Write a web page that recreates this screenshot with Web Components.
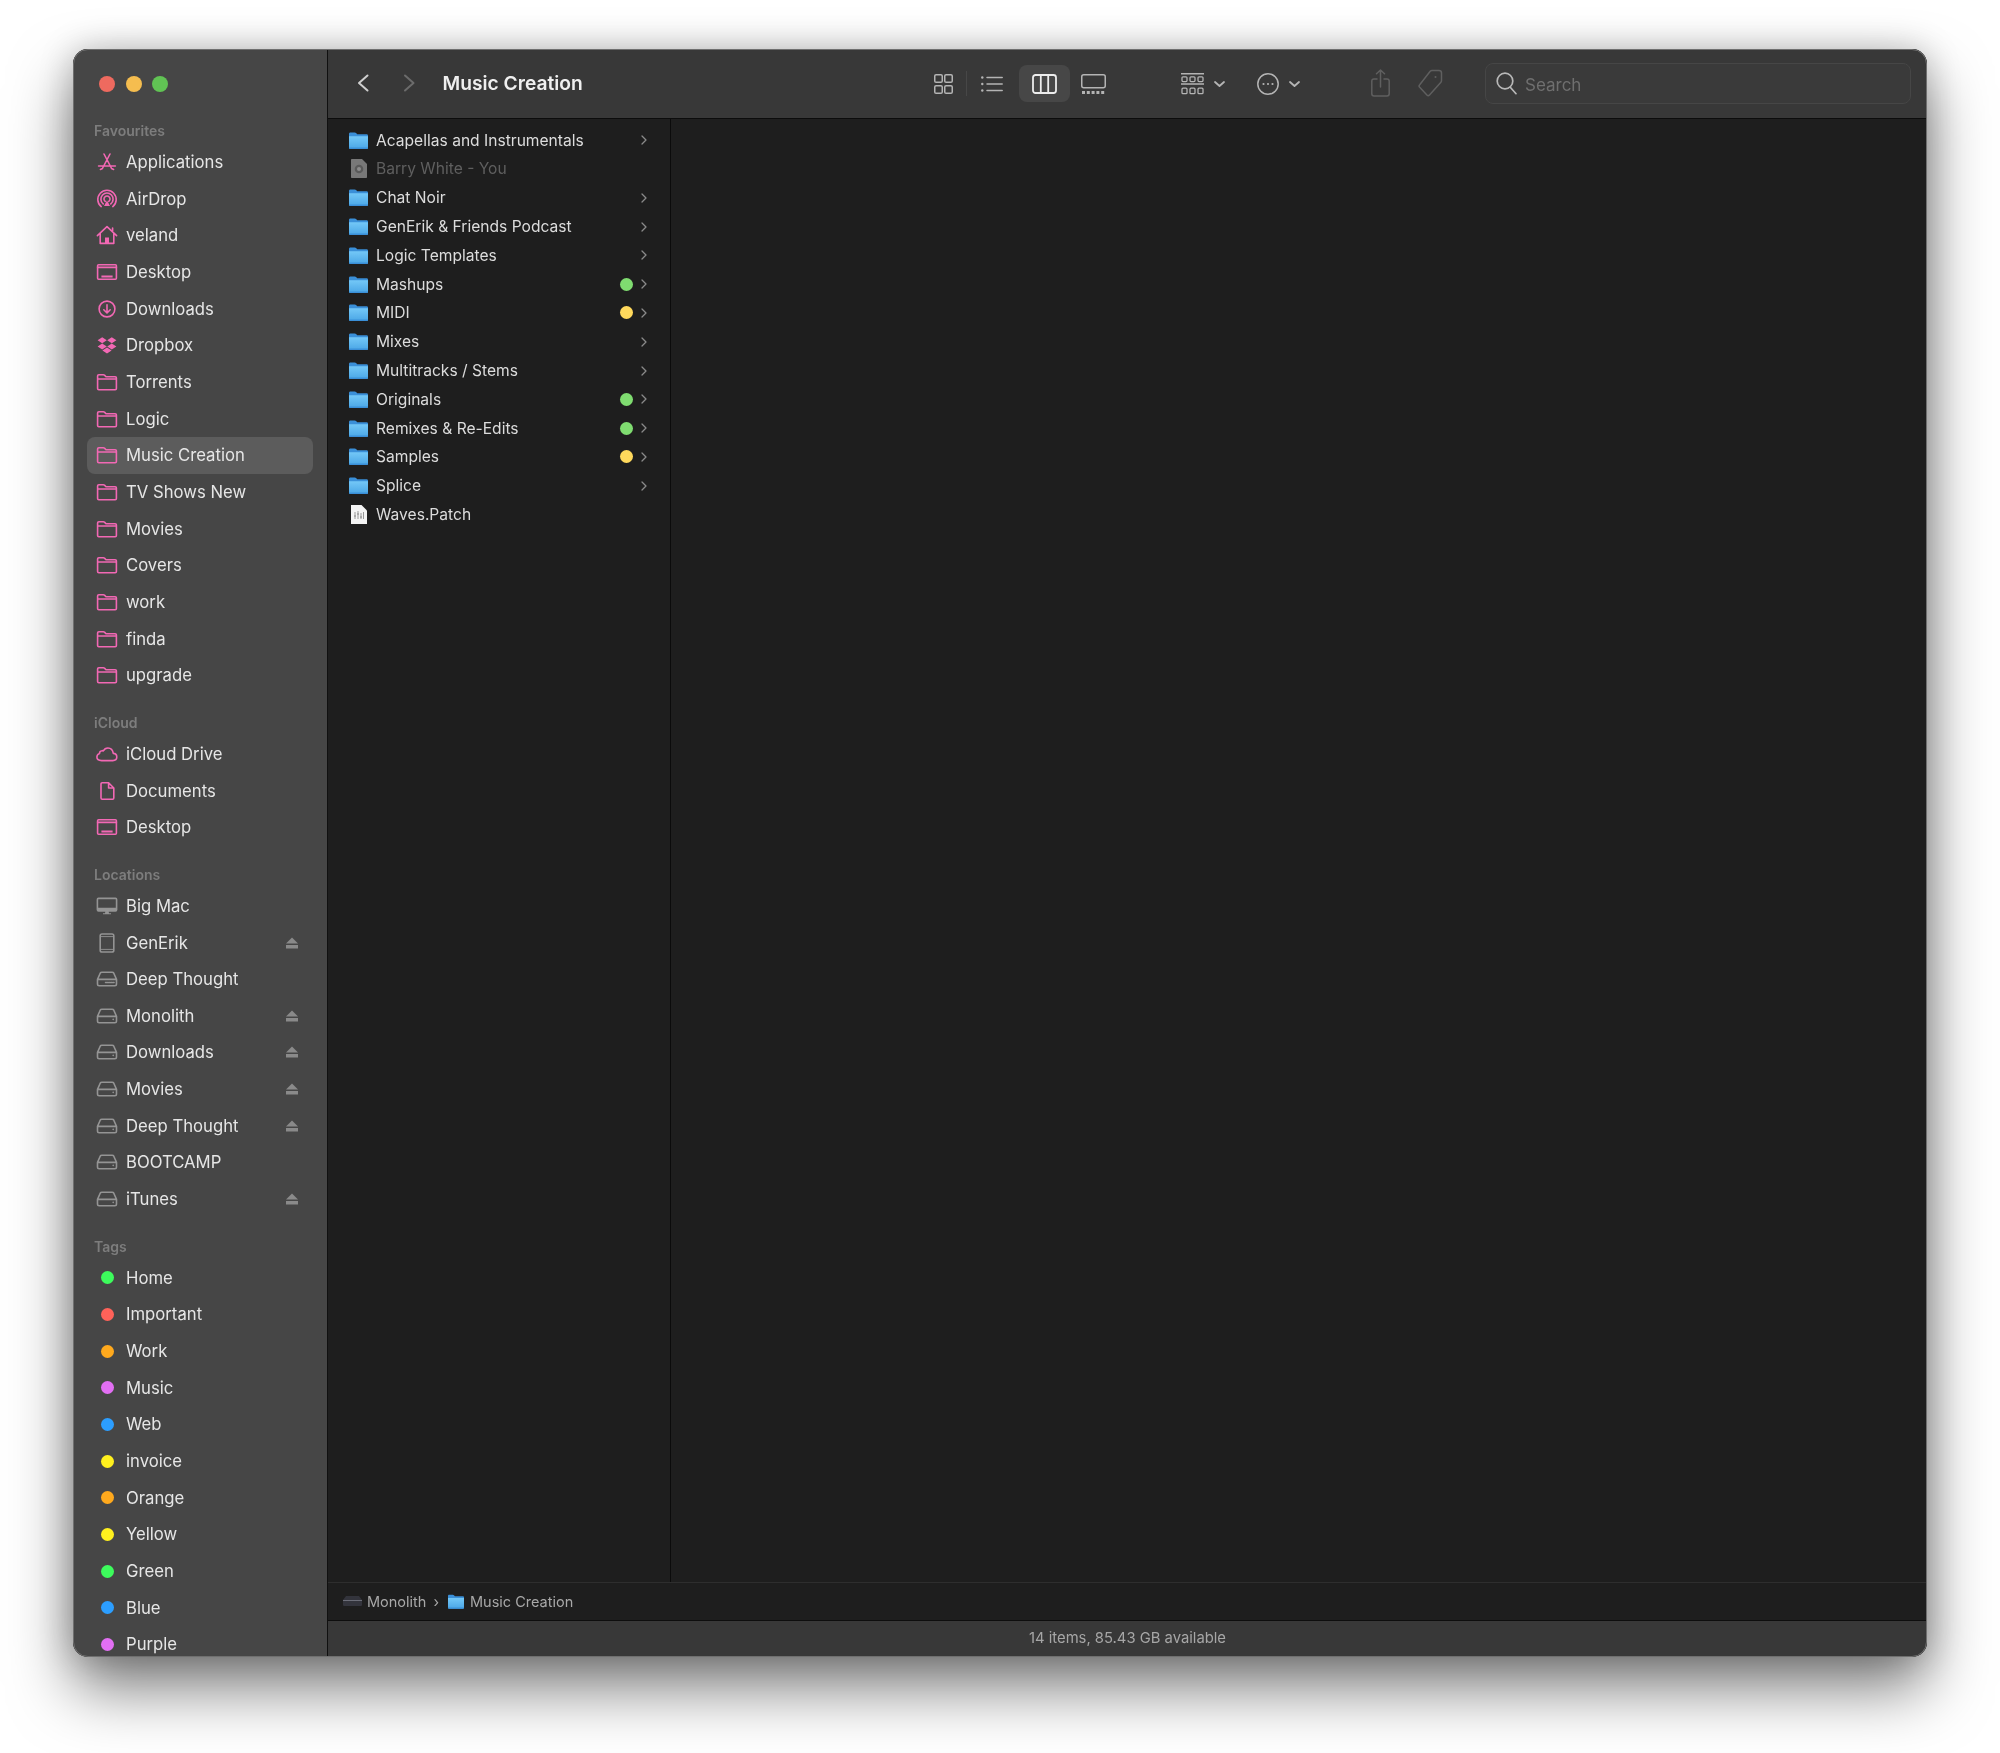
<!DOCTYPE html>
<html>
<head>
<meta charset="utf-8">
<title>Music Creation</title>
<style>
  html, body { margin: 0; background: #fff; }
  body { padding: 49px 73px 96px; font-family: Inter, "Noto Sans", "Liberation Sans", sans-serif; -webkit-font-smoothing: antialiased; }
</style>
</head>
<body>
<finder-window>
  <finder-sidebar slot="sidebar">
    <side-section label="Favourites">
      <side-item icon="apps">Applications</side-item>
      <side-item icon="airdrop">AirDrop</side-item>
      <side-item icon="home">veland</side-item>
      <side-item icon="desktop">Desktop</side-item>
      <side-item icon="downloads">Downloads</side-item>
      <side-item icon="dropbox">Dropbox</side-item>
      <side-item icon="folder">Torrents</side-item>
      <side-item icon="folder">Logic</side-item>
      <side-item icon="folder" selected>Music Creation</side-item>
      <side-item icon="folder">TV Shows New</side-item>
      <side-item icon="folder">Movies</side-item>
      <side-item icon="folder">Covers</side-item>
      <side-item icon="folder">work</side-item>
      <side-item icon="folder">finda</side-item>
      <side-item icon="folder">upgrade</side-item>
    </side-section>
    <side-section label="iCloud">
      <side-item icon="cloud">iCloud Drive</side-item>
      <side-item icon="doc">Documents</side-item>
      <side-item icon="desktop">Desktop</side-item>
    </side-section>
    <side-section label="Locations">
      <side-item icon="imac" gray>Big Mac</side-item>
      <side-item icon="ipad" gray eject>GenErik</side-item>
      <side-item icon="nas" gray>Deep Thought</side-item>
      <side-item icon="hdd" gray eject>Monolith</side-item>
      <side-item icon="hdd" gray eject>Downloads</side-item>
      <side-item icon="hdd" gray eject>Movies</side-item>
      <side-item icon="hdd" gray eject>Deep Thought</side-item>
      <side-item icon="hdd" gray>BOOTCAMP</side-item>
      <side-item icon="hdd" gray eject>iTunes</side-item>
    </side-section>
    <side-section label="Tags">
      <side-item tag="#3dfb5c">Home</side-item>
      <side-item tag="#ff6259">Important</side-item>
      <side-item tag="#ffa91d">Work</side-item>
      <side-item tag="#e26ff3">Music</side-item>
      <side-item tag="#2c9eff">Web</side-item>
      <side-item tag="#fff01e">invoice</side-item>
      <side-item tag="#ffa91d">Orange</side-item>
      <side-item tag="#fff01e">Yellow</side-item>
      <side-item tag="#3dfb5c">Green</side-item>
      <side-item tag="#2c9eff">Blue</side-item>
      <side-item tag="#e26ff3">Purple</side-item>
    </side-section>
  </finder-sidebar>

  <finder-toolbar slot="toolbar">Music Creation</finder-toolbar>

  <finder-column slot="columns">
    <column-row kind="folder" more>Acapellas and Instrumentals</column-row>
    <column-row kind="alias" dim>Barry White - You</column-row>
    <column-row kind="folder" more>Chat Noir</column-row>
    <column-row kind="folder" more>GenErik &amp; Friends Podcast</column-row>
    <column-row kind="folder" more>Logic Templates</column-row>
    <column-row kind="folder" more dot="#7fdc70">Mashups</column-row>
    <column-row kind="folder" more dot="#ffd95c">MIDI</column-row>
    <column-row kind="folder" more>Mixes</column-row>
    <column-row kind="folder" more>Multitracks / Stems</column-row>
    <column-row kind="folder" more dot="#7fdc70">Originals</column-row>
    <column-row kind="folder" more dot="#7fdc70">Remixes &amp; Re-Edits</column-row>
    <column-row kind="folder" more dot="#ffd95c">Samples</column-row>
    <column-row kind="folder" more>Splice</column-row>
    <column-row kind="patch">Waves.Patch</column-row>
  </finder-column>

  <path-bar slot="path"></path-bar>
  <status-bar slot="status">14 items, 85.43 GB available</status-bar>
</finder-window>

<script>
const PINK = {
  apps: '<path d="M9 4l7.600 14.500M15 4L7.400 18.500M3.600 16h16.800M5.400 19.500l2-1M18.600 19.500l-2-1"/>',
  airdrop: '<path d="M6.200 19.600a9.200 9.200 0 1 1 11.600 0M8.200 16.900a6.100 6.100 0 1 1 7.600 0M10.200 14.400a3 3 0 1 1 3.600 0"/><path d="M12 13.600l3 5.400H9z" fill="currentColor" stroke="none"/>',
  home: '<path d="M2.400 12.600L12 3.600l9.600 9M5.200 10.400V20.400h13.600V10.400M17.600 5V9"/><path d="M10 14.400h4v6h-4z" fill="currentColor" stroke="none"/>',
  desktop: '<rect x="2.600" y="4.800" width="18.800" height="14.400" rx="1"/><path d="M2.600 7.400h18.800"/><path d="M6.400 15.400h11.200v2H6.400z" fill="currentColor" stroke="none"/>',
  downloads: '<circle cx="12" cy="12" r="7.900"/><path d="M12 7.800v8M8.800 12.800l3.200 3.200 3.200-3.200"/>',
  dropbox: '<path d="M7.200 4.200l4.600 3-4.600 3-4.600-3zM16.800 4.200l4.600 3-4.600 3-4.600-3zM7.200 10.600l4.600 3-4.600 3-4.600-3zM16.800 10.600l4.600 3-4.600 3-4.600-3zM12 14.600l4.600 3-4.600 3-4.600-3z" fill="currentColor" stroke="none"/>',
  folder: '<path d="M2.600 18.600V6c0-.8.400-1.200 1.200-1.200h4.600c.6 0 .9.200 1.300.6L11 6.800h9.200c.8 0 1.200.4 1.200 1.200v10.600c0 .8-.4 1.200-1.200 1.200H3.800c-.8 0-1.200-.4-1.200-1.200zM2.600 9h18.800"/>',
  cloud: '<path d="M6.600 18.600h11.200c2.400 0 4-1.500 4-3.600 0-2-1.500-3.500-3.500-3.600C17.800 8 15.400 6 12.900 6c-2.100 0-3.700 1.200-4.600 3-.5-.3-1-.4-1.500-.3-1.300.2-2.200 1.200-2.300 2.700C2.900 12 1.900 13.500 1.900 15c0 2.100 2 3.600 4.700 3.600z"/>',
  doc: '<path d="M6 5.100c0-.8.400-1.300 1.200-1.300h6.400L18.800 9v10c0 .8-.4 1.200-1.200 1.200H7.200C6.400 20.200 6 19.800 6 19zM13.600 3.800V9h5.200"/>',
  imac: '<path d="M3.500 4.400h17c.7 0 1.100.4 1.100 1.100v10.300c0 .7-.4 1.100-1.100 1.100h-17c-.7 0-1.100-.4-1.100-1.100V5.500c0-.7.400-1.100 1.100-1.100z"/><path d="M2.400 13.800h19.200v2.200c0 .7-.4 1.100-1.100 1.100h-17c-.7 0-1.100-.4-1.100-1.100zM10.400 17h3.200l.4 2.200h2v1.100H8v-1.100h2z" fill="currentColor" stroke="none"/>',
  ipad: '<rect x="5.200" y="3" width="13.600" height="18" rx="1.800"/><path d="M6 5.600h12M6 18.400h12" stroke-width=".9"/>',
  hdd: '<path d="M6.800 5.200h10.400c.7 0 1.200.3 1.600 1l2.700 6.200v4.800c0 1-.6 1.600-1.600 1.600H4.100c-1 0-1.600-.6-1.600-1.600v-4.800l2.700-6.200c.4-.7.900-1 1.600-1zM2.500 12.400h19"/><circle cx="18.200" cy="15.400" r=".8" fill="currentColor" stroke="none"/>',
  nas: '<path d="M6.800 5.200h10.400c.7 0 1.200.3 1.600 1l2.700 6.200v4.800c0 1-.6 1.600-1.600 1.600H4.100c-1 0-1.600-.6-1.600-1.600v-4.800l2.700-6.200c.4-.7.900-1 1.600-1zM2.500 12.400h19"/><path d="M10.500 15.500h9" stroke-dasharray="1 .9" stroke-width="1.500"/>'
};

const svg = (w, h, vb, body, extra = '') =>
  `<svg width="${w}" height="${h}" viewBox="${vb}" fill="none" stroke="currentColor" stroke-linecap="round" stroke-linejoin="round" ${extra}>${body}</svg>`;

class FinderWindow extends HTMLElement {
  constructor() {
    super();
    this.attachShadow({ mode: 'open' });
    this.shadowRoot.innerHTML = `
      <style>
        :host {
          display: grid;
          grid-template-columns: 254px 1fr;
          width: 1854px;
          height: 1608px;
          position: relative;
          border-radius: 15px;
          background: #1e1e1e;
          box-shadow: 0 32px 62px rgba(0,0,0,.5), 0 0 34px rgba(0,0,0,.22);
        }
        .inner {
          display: grid;
          grid-template-columns: 254px 1fr;
          grid-column: 1 / -1;
          min-height: 0;
          border-radius: 15px;
          overflow: hidden;
          filter: blur(.35px);
        }
        .frame {
          position: absolute;
          inset: 0;
          border: 1.500px solid #6f6f6f;
          border-radius: 15px;
          pointer-events: none;
        }
        .side { min-height: 0; overflow: hidden; }
        .main {
          display: flex;
          flex-direction: column;
          min-height: 0;
          min-width: 0;
          border-left: 1px solid #101010;
        }
        .fill { flex: 1; min-height: 0; display: flex; }
      </style>
      <div class="inner">
        <div class="side"><slot name="sidebar"></slot></div>
        <div class="main">
          <slot name="toolbar"></slot>
          <div class="fill"><slot name="columns"></slot></div>
          <slot name="path"></slot>
          <slot name="status"></slot>
        </div>
      </div>
      <div class="frame"></div>
    `;
  }
}

class FinderSidebar extends HTMLElement {
  constructor() {
    super();
    this.attachShadow({ mode: 'open' });
    this.shadowRoot.innerHTML = `
      <style>
        :host { display: block; height: 100%; background: #464646; overflow: hidden; }
        .lights { display: flex; gap: 10.500px; height: 54px; padding: 27px 0 0 26px; box-sizing: border-box; }
        .lights i { width: 16px; height: 16px; border-radius: 50%; }
        .list { padding: 0 14px; margin-top: -1.300px; }
      </style>
      <div class="lights">
        <i style="background:#ee6a5f"></i><i style="background:#f5bd4f"></i><i style="background:#61c354"></i>
      </div>
      <div class="list"><slot></slot></div>
    `;
  }
}

class SideSection extends HTMLElement {
  constructor() {
    super();
    this.attachShadow({ mode: 'open' });
    this.shadowRoot.innerHTML = `
      <style>
        :host { display: block; }
        .head {
          height: 42px;
          box-sizing: border-box;
          padding: 20.500px 0 0 7px;
          font-size: 14px;
          line-height: 18px;
          font-weight: 600;
          color: #7d7d7d;
        }
      </style>
      <div class="head"></div>
      <slot></slot>
    `;
    this.shadowRoot.querySelector('.head').textContent = this.getAttribute('label');
  }
}

class SideItem extends HTMLElement {
  constructor() {
    super();
    this.attachShadow({ mode: 'open' });
    const tag = this.getAttribute('tag');
    const icon = tag
      ? `<span class="tag" style="background:${tag}"></span>`
      : svg(24, 24, '0 0 24 24', PINK[this.getAttribute('icon')], 'stroke-width="1.600"');
    const eject = this.hasAttribute('eject')
      ? `<svg class="eject" width="12" height="12" viewBox="0 0 12 12" fill="#8a8a8a"><path d="M6 .5l6 6H0z"/><rect y="8" width="12" height="3.500"/></svg>`
      : '';
    this.shadowRoot.innerHTML = `
      <style>
        :host {
          display: flex;
          align-items: center;
          height: 36.670px;
          padding-left: 8px;
          border-radius: 8px;
          font-size: 16.700px;
          color: #e6e6e6;
          white-space: nowrap;
        }
        :host([selected]) { background: #5c5c5c; }
        .ico { width: 24px; height: 24px; flex: none; margin-right: 7px; display: flex; align-items: center; justify-content: center; color: #f268b4; }
        :host([gray]) .ico { color: #949494; }
        .tag { width: 13px; height: 13px; border-radius: 50%; }
        .eject { margin-left: auto; margin-right: 15px; flex: none; }
      </style>
      <span class="ico">${icon}</span>
      <slot></slot>
      ${eject}
    `;
  }
}

class FinderToolbar extends HTMLElement {
  constructor() {
    super();
    this.attachShadow({ mode: 'open' });
    const thin = 'stroke-width="1.500"';
    this.shadowRoot.innerHTML = `
      <style>
        :host {
          display: flex;
          align-items: center;
          height: 69px;
          flex: none;
          background: #383838;
          border-bottom: 1px solid #0c0c0c;
          color: #b4b4b4;
        }
        svg { flex: none; display: block; }
        .title { flex: none; width: 491.400px; margin: -1px 0 0 21.600px; font-size: 19.200px; font-weight: 600; color: #efefef; white-space: nowrap; }
        .sep { flex: none; width: 1px; height: 25px; margin: 0 14px 0 13px; background: #474747; }
        .selected { flex: none; width: 51px; height: 37px; margin-left: 16px; border-radius: 8px; background: #474747; color: #ececec; display: flex; align-items: center; justify-content: center; }
        .dim { color: #5f5f5f; }
        .search {
          flex: none;
          box-sizing: border-box;
          width: 426px;
          height: 41px;
          margin-left: 42px;
          border: 1px solid #464646;
          border-radius: 8px;
          display: flex;
          align-items: center;
          padding: 0 0 0 10px;
          gap: 8px;
          font-size: 17px;
          color: #6f6f6f;
          background: #3a3a3a;
        }
        .search span { padding-top: 2px; }
      </style>
      ${svg(24, 36, '0 0 24 36', '<path d="M16.500 10.500L8 18l8.500 7.500"/>', 'stroke-width="2" style="margin-left:23px;margin-top:-1px;color:#cfcfcf"')}
      ${svg(24, 36, '0 0 24 36', '<path d="M8 10.500l8.500 7.500L8 25.500"/>', 'stroke-width="2" style="margin-left:22px;margin-top:-1px;color:#6b6b6b"')}
      <div class="title"><slot></slot></div>
      ${svg(19, 20, '0 0 19 20', '<rect x=".75" y=".75" width="7.500" height="7.500" rx="1.300"/><rect x="10.750" y=".75" width="7.500" height="7.500" rx="1.300"/><rect x=".75" y="11.750" width="7.500" height="7.500" rx="1.300"/><rect x="10.750" y="11.750" width="7.500" height="7.500" rx="1.300"/>', thin)}
      <div class="sep"></div>
      ${svg(22, 16, '0 0 22 16', '<path d="M6 1.500h15.200M6 8h15.200M6 14.500h15.200" /><circle cx="1.300" cy="1.500" r="1.200" fill="currentColor" stroke="none"/><circle cx="1.300" cy="8" r="1.200" fill="currentColor" stroke="none"/><circle cx="1.300" cy="14.500" r="1.200" fill="currentColor" stroke="none"/>', thin)}
      <div class="selected">${svg(25, 20, '0 0 25 20', '<rect x="1" y="1" width="23" height="18" rx="2.500"/><path d="M8.800 1v18M16.200 1v18"/>', 'stroke-width="1.800"')}</div>
      ${svg(25, 20, '0 0 25 20', '<rect x=".75" y=".75" width="23.500" height="13" rx="2"/><path d="M1 18.500h23" stroke-width="3" stroke-dasharray="3 1.800" stroke-linecap="butt"/>', thin + ' style="margin-left:11px"')}
      ${svg(23, 22, '0 0 23 22', '<path d="M0 .75h23M0 11h23"/><rect x="1" y="3.800" width="5" height="4.800" rx="1"/><rect x="9" y="3.800" width="5" height="4.800" rx="1"/><rect x="17" y="3.800" width="5" height="4.800" rx="1"/><rect x="1" y="15.200" width="5" height="5.500" rx="1"/><rect x="9" y="15.200" width="5" height="5.500" rx="1"/><rect x="17" y="15.200" width="5" height="5.500" rx="1"/>', 'stroke-width="1.300" style="margin-left:75px"')}
      ${svg(11, 6, '0 0 11 6', '<path d="M1 1l4.500 4L10 1"/>', 'stroke-width="1.800" style="margin-left:10px"')}
      ${svg(22, 22, '0 0 22 22', '<circle cx="11" cy="11" r="10.200"/><circle cx="6.500" cy="11" r="1.100" fill="currentColor" stroke="none"/><circle cx="11" cy="11" r="1.100" fill="currentColor" stroke="none"/><circle cx="15.500" cy="11" r="1.100" fill="currentColor" stroke="none"/>', thin + ' style="margin-left:32px"')}
      ${svg(11, 6, '0 0 11 6', '<path d="M1 1l4.500 4L10 1"/>', 'stroke-width="1.800" style="margin-left:10px"')}
      ${svg(19, 28, '0 0 19 28', '<path d="M6 10H3c-1.500 0-2.200.7-2.200 2.200v12.600c0 1.500.7 2.200 2.200 2.200h13c1.500 0 2.200-.7 2.200-2.200V12.200c0-1.500-.7-2.200-2.200-2.200h-3M9.500 18V1M5.500 4.800L9.500 1l4 3.800"/>', thin + ' class="dim" style="margin-left:71px;margin-top:-1px"')}
      ${svg(25, 28, '0 0 25 28', '<path d="M14 1.500l7 0c1.500 0 2.500 1 2.500 2.500v7.500c0 .8-.3 1.500-.8 2L11.500 26c-.8.800-1.800.800-2.600 0L1.700 18.300c-.8-.8-.8-1.800 0-2.600L12.200 2.200c.5-.5 1-.7 1.800-.7z"/><circle cx="17.500" cy="8" r="1" fill="currentColor" stroke="none"/>', thin + ' class="dim" style="margin-left:28px;margin-top:-1px"')}
      <div class="search">
        ${svg(21, 23, '0 0 21 23', '<circle cx="9" cy="9" r="7.800"/><path d="M14.500 15.500l5.500 6.200"/>', 'stroke-width="1.700" style="color:#b8b8b8"')}
        <span>Search</span>
      </div>
    `;
  }
}

class FinderColumn extends HTMLElement {
  constructor() {
    super();
    this.attachShadow({ mode: 'open' });
    this.shadowRoot.innerHTML = `
      <style>
        :host {
          display: block;
          flex: none;
          width: 342px;
          padding-top: 6.800px;
          border-right: 1px solid #0b0b0b;
        }
      </style>
      <slot></slot>
    `;
  }
}

const FOLDER_ICON = (w, h) => `
  <svg width="${w}" height="${h}" viewBox="0 0 19 17">
    <defs><linearGradient id="f" x1="0" y1="0" x2="0" y2="1"><stop offset="0" stop-color="#74c8f7"/><stop offset="1" stop-color="#4aa6e6"/></linearGradient></defs>
    <path d="M0 2c0-1 .5-1.500 1.500-1.500h4.200c.6 0 1 .2 1.400.6L8.200 2.200h9.300c1 0 1.500.5 1.500 1.500V8H0z" fill="#3a8fd8"/>
    <path d="M0 4.200h19v11.300c0 1-.5 1.500-1.500 1.500h-16C.5 17 0 16.500 0 15.500z" fill="url(#f)"/>
    <path d="M0 15.600h19v0c0 .9-.5 1.400-1.500 1.400h-16C.5 17 0 16.500 0 15.600z" fill="#3a8fd8"/>
  </svg>`;

class ColumnRow extends HTMLElement {
  constructor() {
    super();
    this.attachShadow({ mode: 'open' });
    const kind = this.getAttribute('kind');
    let icon = FOLDER_ICON(19, 17);
    if (kind === 'alias') {
      icon = `<svg width="16" height="19" viewBox="0 0 16 19"><path d="M1 0h10l5 5v13c0 .6-.4 1-1 1H1c-.6 0-1-.4-1-1V1c0-.6.4-1 1-1z" fill="#787878"/><circle cx="8" cy="10" r="4.300" fill="#5a5a5a"/><circle cx="8" cy="10" r="2" fill="#8c8c8c"/></svg>`;
    } else if (kind === 'patch') {
      icon = `<svg width="16" height="19" viewBox="0 0 16 19"><path d="M0 0h10.500L16 5.500V19H0z" fill="#f4f4f4"/><path d="M4 7v7M7 6v8M10 8v6M12.500 7v7" stroke="#9a9a9a" stroke-width="1"/><path d="M3 11h2M6 9h2M9 12h2" stroke="#8a8a8a" stroke-width="1"/></svg>`;
    }
    const dot = this.getAttribute('dot');
    this.shadowRoot.innerHTML = `
      <style>
        :host {
          display: flex;
          align-items: center;
          height: 28.800px;
          padding-left: 21px;
          padding-right: 23px;
          font-size: 15.600px;
          color: #dcdcdc;
          white-space: nowrap;
        }
        :host([dim]) { color: #5f5f5f; }
        .ico { flex: none; width: 19px; display: flex; justify-content: center; margin-right: 8px; }
        .dot { width: 13px; height: 13px; border-radius: 50%; margin-left: auto; }
        .chev { flex: none; color: #8a8a8a; }
        .dot + .chev { margin-left: 8px; }
        .solo { margin-left: auto; }
      </style>
      <span class="ico">${icon}</span>
      <slot></slot>
      ${dot ? `<span class="dot" style="background:${dot}"></span>` : ''}
      ${this.hasAttribute('more') ? svg(6, 10, '0 0 6 10', '<path d="M1 1l4 4-4 4"/>', `stroke-width="1.300" class="chev ${dot ? '' : 'solo'}"`) : ''}
    `;
  }
}

class PathBar extends HTMLElement {
  constructor() {
    super();
    this.attachShadow({ mode: 'open' });
    this.shadowRoot.innerHTML = `
      <style>
        :host {
          display: flex;
          align-items: center;
          flex: none;
          box-sizing: content-box;
          height: 36px;
          padding: 0 0 1px 15px;
          background: #1e1e1e;
          border-top: 1.500px solid #2e2e2e;
          border-bottom: 1.500px solid #0e0e0e;
          font-size: 14.500px;
          color: #a8a8a8;
          white-space: nowrap;
        }
        svg { flex: none; display: block; }
        .sep { margin: 0 8px 0 7px; }
      </style>
      <svg width="19" height="10" viewBox="0 0 19 10" style="margin-right:5px"><path d="M3 0h13l3 4v4.500c0 1-.5 1.500-1.500 1.500h-16C.5 10 0 9.500 0 8.500V4z" fill="#33343c"/><path d="M0 4h19v1H0z" fill="#6b6d78"/></svg>
      <span>Monolith</span>
      <span class="sep">›</span>
      <span style="margin-left:1px;margin-right:6px">${FOLDER_ICON(16, 15)}</span>
      <span>Music Creation</span>
    `;
  }
}

class StatusBar extends HTMLElement {
  constructor() {
    super();
    this.attachShadow({ mode: 'open' });
    this.shadowRoot.innerHTML = `
      <style>
        :host {
          display: flex;
          align-items: center;
          justify-content: center;
          flex: none;
          box-sizing: border-box;
          height: 36px;
          padding-bottom: 3px;
          background: #383838;
          font-size: 14.800px;
          color: #a6a6a6;
        }
      </style>
      <slot></slot>
    `;
  }
}

customElements.define('finder-window', FinderWindow);
customElements.define('finder-sidebar', FinderSidebar);
customElements.define('side-section', SideSection);
customElements.define('side-item', SideItem);
customElements.define('finder-toolbar', FinderToolbar);
customElements.define('finder-column', FinderColumn);
customElements.define('column-row', ColumnRow);
customElements.define('path-bar', PathBar);
customElements.define('status-bar', StatusBar);
</script>
</body>
</html>
